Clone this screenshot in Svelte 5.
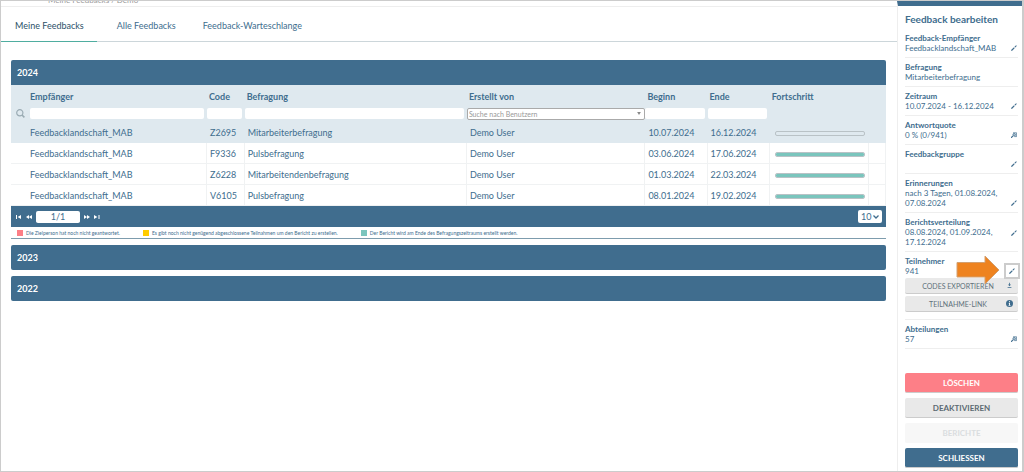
<script>
  const tabs = ['Meine Feedbacks', 'Alle Feedbacks', 'Feedback-Warteschlange'];
  let activeTab = $state('Meine Feedbacks');

  let search = $state({ name: '', code: '', survey: '', user: '', start: '', end: '' });
  let page = $state('1/1');
  let pageSize = $state('10');

  const rows = [
    { name: 'Feedbacklandschaft_MAB', code: 'Z2695', survey: 'Mitarbeiterbefragung', user: 'Demo User', start: '10.07.2024', end: '16.12.2024', progress: 0, selected: true },
    { name: 'Feedbacklandschaft_MAB', code: 'F9336', survey: 'Pulsbefragung', user: 'Demo User', start: '03.06.2024', end: '17.06.2024', progress: 100 },
    { name: 'Feedbacklandschaft_MAB', code: 'Z6228', survey: 'Mitarbeitendenbefragung', user: 'Demo User', start: '01.03.2024', end: '22.03.2024', progress: 100 },
    { name: 'Feedbacklandschaft_MAB', code: 'V6105', survey: 'Pulsbefragung', user: 'Demo User', start: '08.01.2024', end: '19.02.2024', progress: 100 }
  ];

  const legend = [
    { tone: 'red', text: 'Die Zielperson hat noch nicht geantwortet.' },
    { tone: 'yellow', text: 'Es gibt noch nicht genügend abgeschlossene Teilnahmen um den Bericht zu erstellen.' },
    { tone: 'teal', text: 'Der Bericht wird am Ende des Befragungszeitraums erstellt werden.' }
  ];

  const details = [
    { label: 'Feedback-Empfänger', value: 'Feedbacklandschaft_MAB', icon: 'edit' },
    { label: 'Befragung', value: 'Mitarbeiterbefragung' },
    { label: 'Zeitraum', value: '10.07.2024 - 16.12.2024', icon: 'edit' },
    { label: 'Antwortquote', value: '0 % (0/941)', icon: 'view' },
    { label: 'Feedbackgruppe', value: '', icon: 'edit' },
    { label: 'Erinnerungen', value: 'nach 3 Tagen, 01.08.2024, 07.08.2024', icon: 'edit' },
    { label: 'Berichtsverteilung', value: '08.08.2024, 01.09.2024, 17.12.2024', icon: 'edit', middle: true },
    { label: 'Teilnehmer', value: '941', icon: 'edit', marked: true },
    { label: 'Abteilungen', value: '57', icon: 'view' }
  ];
</script>

{#snippet toolIcon(kind)}
  {#if kind === 'edit'}
    <svg width="6" height="6" viewBox="0 0 6 6" aria-hidden="true">
      <path d="M0 6 L.5 4.5 L3 2.2 L3.8 3 L1.5 5.5 Z M3.5 1.7 L4.8 .5 Q5.1 .2 5.5 .5 Q5.8 .9 5.5 1.2 L4.3 2.5 Z" />
    </svg>
  {:else}
    <svg width="6" height="6" viewBox="0 0 6 6" aria-hidden="true">
      <path d="M2 .8 H5.6 V4.6 H3.4" fill="none" stroke="currentColor" stroke-width=".7" />
      <path d="M0 5.8 L2 3.9" fill="none" stroke="currentColor" stroke-width="1.2" />
      <circle cx="3.2" cy="2.7" r="1.3" fill="#a9c0cf" stroke="currentColor" stroke-width=".7" />
    </svg>
  {/if}
{/snippet}

<div class="page">
  <main>
    <div class="crumbs"><span>Meine Feedbacks / Demo</span></div>

    <nav class="tabs">
      {#each tabs as tab}
        <button class="tab" class:active={activeTab === tab} onclick={() => (activeTab = tab)}>{tab}</button>
      {/each}
    </nav>

    <div class="years">
      <section>
        <button class="year open">2024</button>
        <table>
          <colgroup>
            <col class="c-name" /><col class="c-code" /><col class="c-survey" /><col class="c-user" />
            <col class="c-date" /><col class="c-date" /><col class="c-progress" /><col />
          </colgroup>
          <thead>
            <tr>
              <th class="first">Empfänger</th>
              <th>Code</th>
              <th>Befragung</th>
              <th>Erstellt von</th>
              <th>Beginn</th>
              <th>Ende</th>
              <th>Fortschritt</th>
              <th></th>
            </tr>
            <tr class="filters">
              <td>
                <div class="search">
                  <svg width="9" height="9" viewBox="0 0 9 9" aria-hidden="true">
                    <circle cx="3.8" cy="3.8" r="3.1" fill="none" stroke="currentColor" stroke-width="1.2" />
                    <path d="M6 6 L8.4 8.4" stroke="currentColor" stroke-width="1.6" />
                  </svg>
                  <input aria-label="Empfänger" bind:value={search.name} />
                </div>
              </td>
              <td><input aria-label="Code" bind:value={search.code} /></td>
              <td><input aria-label="Befragung" bind:value={search.survey} /></td>
              <td class="user-filter">
                <select aria-label="Erstellt von" bind:value={search.user}>
                  <option value="">Suche nach Benutzern</option>
                  <option value="demo">Demo User</option>
                </select>
              </td>
              <td><input aria-label="Beginn" bind:value={search.start} /></td>
              <td><input aria-label="Ende" bind:value={search.end} /></td>
              <td></td>
              <td></td>
            </tr>
          </thead>
          <tbody>
            {#each rows as row}
              <tr class:selected={row.selected}>
                <td class="first">{row.name}</td>
                <td>{row.code}</td>
                <td>{row.survey}</td>
                <td>{row.user}</td>
                <td>{row.start}</td>
                <td>{row.end}</td>
                <td>
                  <div class="bar" role="progressbar" aria-label="Fortschritt" aria-valuenow={row.progress}>
                    <div class="fill" style="width: {row.progress}%"></div>
                  </div>
                </td>
                <td></td>
              </tr>
            {/each}
          </tbody>
        </table>

        <div class="pager">
          <button aria-label="Erste Seite">
            <svg width="6" height="4" viewBox="0 0 6 4"><path d="M0 0 H1 V4 H0 Z M5 0 V4 L1.6 2 Z" /></svg>
          </button>
          <button aria-label="Vorherige Seite">
            <svg width="6" height="4" viewBox="0 0 6 4"><path d="M3 0 V4 L0 2 Z M6 0 V4 L3 2 Z" /></svg>
          </button>
          <input class="page-no" aria-label="Seite" bind:value={page} />
          <button aria-label="Nächste Seite">
            <svg width="6" height="4" viewBox="0 0 6 4"><path d="M0 0 V4 L3 2 Z M3 0 V4 L6 2 Z" /></svg>
          </button>
          <button aria-label="Letzte Seite">
            <svg width="6" height="4" viewBox="0 0 6 4"><path d="M0 0 V4 L3.4 2 Z M4.5 0 H5.5 V4 H4.5 Z" /></svg>
          </button>
          <select class="page-size" aria-label="Einträge pro Seite" bind:value={pageSize}>
            <option>10</option>
            <option>25</option>
            <option>50</option>
          </select>
        </div>

        <div class="legend">
          {#each legend as item}
            <span class="legend-item"><i class={item.tone}></i>{item.text}</span>
          {/each}
        </div>
      </section>

      <button class="year">2023</button>
      <button class="year">2022</button>
    </div>
  </main>

  <aside>
    <h2>Feedback bearbeiten</h2>

    {#each details as item}
      <div class="detail" class:with-actions={item.marked}>
        <div class="detail-row">
          <div class="detail-text">
            <strong>{item.label}</strong>
            <span>{item.value}</span>
          </div>
          {#if item.icon}
            <button class="tool" class:middle={item.middle} class:marked={item.marked} aria-label="{item.label} öffnen">
              {@render toolIcon(item.icon)}
            </button>
          {/if}
          {#if item.marked}
            <svg class="arrow" width="44" height="30" viewBox="0 0 44 30" aria-hidden="true">
              <path d="M1 7.5 H29 V1 L43 15 L29 29 V22 H1 Z" />
            </svg>
          {/if}
        </div>
        {#if item.marked}
          <button class="action">
            <span>CODES EXPORTIEREN</span>
            <svg width="7" height="7" viewBox="0 0 7 7" aria-hidden="true">
              <path d="M3.1 .8 H3.9 V2.6 H5 L3.5 4.3 L2 2.6 H3.1 Z M1.6 5.2 H5.4 V5.9 H1.6 Z" />
            </svg>
          </button>
          <button class="action">
            <span>TEILNAHME-LINK</span>
            <svg width="7" height="7" viewBox="0 0 7 7" aria-hidden="true">
              <circle cx="3.5" cy="3.5" r="3.5" />
              <path class="light" d="M3 1.2 H4 V2.2 H3 Z M2.7 2.9 H4 V5 H4.5 V5.7 H2.6 V5 H3.1 V3.5 H2.7 Z" />
            </svg>
          </button>
        {/if}
      </div>
    {/each}

    <div class="buttons">
      <button class="danger">LÖSCHEN</button>
      <button>DEAKTIVIEREN</button>
      <button disabled>BERICHTE</button>
      <button class="primary">SCHLIESSEN</button>
    </div>
  </aside>
</div>

<style>
  :global(body) {
    --blue: #406d8e;
    --pale: #dfe9ef;
    --teal: #7ac5bd;
    --line: #f0f2f3;
    background: #fff;
  }

  * { box-sizing: border-box; }

  button, input, select {
    font: inherit;
    color: inherit;
    margin: 0;
    padding: 0;
    border: 0;
    outline: 0;
  }
  button { cursor: pointer; background: none; }
  svg { display: block; fill: currentColor; }

  .page {
    display: flex;
    min-height: 100vh;
    border: 1px solid #ccc;
    border-right-width: 2px;
    font-family: Lato, "Liberation Sans", sans-serif;
    font-size: 9px;
    color: var(--blue);
  }

  main { flex: 1; min-width: 0; }

  .crumbs {
    display: flex;
    align-items: flex-end;
    height: 6px;
    padding-left: 47px;
    padding-bottom: 2px;
    overflow: hidden;
    border-bottom: 1px solid #eee;
    font-size: 8px;
    line-height: 8px;
    color: #999;
  }

  .tabs {
    display: flex;
    height: 35px;
    border-bottom: 1px solid #ccd6da;
  }
  .tab {
    padding: 2px 13px 0 14px;
    margin-bottom: -1px;
    border-bottom: 1px solid transparent;
  }
  .tab.active {
    margin-right: 6px;
    color: #2b5068;
    border-bottom-color: #4fada0;
  }

  .years {
    display: flex;
    flex-direction: column;
    gap: 6px;
    padding: 18px 11px 0 10px;
  }
  .year {
    display: block;
    width: 100%;
    height: 25px;
    padding: 0 6px;
    border-radius: 2px;
    background: var(--blue);
    color: #fff;
    font-weight: 700;
    text-align: left;
  }
  .year.open { border-radius: 2px 2px 0 0; }

  table {
    width: 100%;
    table-layout: fixed;
    border-collapse: separate;
    border-spacing: 0;
  }
  .c-name { width: 22.4%; }
  .c-code { width: 4.3%; }
  .c-survey { width: 25.4%; }
  .c-user { width: 20.4%; }
  .c-date { width: 7.1%; }
  .c-progress { width: 11.4%; }

  th, td { text-align: left; white-space: nowrap; }
  thead { background: var(--pale); }
  th { height: 22px; padding: 0 2px; }
  .filters td { height: 15px; padding: 0 3px 2px 0; }
  .filters .user-filter { padding-right: 0; }
  .filters input {
    display: block;
    width: 100%;
    height: 11px;
    padding: 0 3px;
    border-radius: 2px;
    background: #fff;
  }
  .filters select {
    display: block;
    width: 100%;
    height: 12px;
    padding: 0 1px;
    border: 1px solid #aaa;
    border-radius: 2px;
    appearance: none;
    background: #fff url("data:image/svg+xml,%3Csvg xmlns='http://www.w3.org/2000/svg' viewBox='0 0 5 4'%3E%3Cpath d='M0 0H5L2.5 4Z' fill='%23888'/%3E%3C/svg%3E") no-repeat right 3px center / 4px 3px;
    color: #999;
    font-size: 7px;
  }
  .search {
    display: flex;
    align-items: center;
    gap: 5px;
    padding-left: 5px;
    color: #9aabb3;
  }
  .search svg { flex: none; }

  tbody td {
    height: 21px;
    padding: 0 3px;
    border-right: 1px solid var(--line);
    border-bottom: 1px solid var(--line);
  }
  .selected td { background: var(--pale); border-color: var(--pale); }
  th.first, td.first { padding-left: 19px; }

  .bar {
    height: 5px;
    margin: 2px 0 0 2px;
    border: 1px solid #b9c2c6;
    border-radius: 2px;
    overflow: hidden;
  }
  .fill { height: 100%; background: var(--teal); }

  .pager {
    display: flex;
    align-items: center;
    gap: 4px;
    height: 21px;
    padding: 0 4px 0 5px;
    background: var(--blue);
    color: #fff;
  }
  .pager input, .pager select {
    border-radius: 2px;
    background-color: #fff;
    color: var(--blue);
    font-size: 9px;
  }
  .page-no { width: 44px; height: 12px; text-align: center; }
  .page-size {
    width: 24px;
    height: 13px;
    margin-left: auto;
    padding-left: 3px;
    appearance: none;
    background: url("data:image/svg+xml,%3Csvg xmlns='http://www.w3.org/2000/svg' viewBox='0 0 6 4'%3E%3Cpath d='M.5 .5L3 3L5.5 .5' fill='none' stroke='%23406d8e' stroke-width='1.3'/%3E%3C/svg%3E") no-repeat right 3px center / 6px 4px;
  }

  .legend {
    display: flex;
    gap: 23px;
    align-items: center;
    height: 12px;
    padding-left: 6px;
    border-bottom: 1px solid #7d9cad;
    font-size: 5px;
  }
  .legend-item { display: flex; align-items: center; gap: 3px; }
  .legend i { width: 6px; height: 6px; }
  .red { background: #fd7f87; }
  .yellow { background: #ffcc00; }
  .teal { background: var(--teal); }

  aside {
    display: flex;
    flex-direction: column;
    width: 125px;
    padding: 0 4px 3px 7px;
    border-top: 5px solid var(--blue);
    border-left: 1px solid #eee;
    font-size: 8px;
  }
  h2 {
    margin: 0;
    padding: 7px 0 4px;
    font-size: 10px;
    line-height: 12px;
  }

  .detail {
    padding: 5px 0 4px;
    border-bottom: 1px solid #eee;
  }
  .detail.with-actions { padding-bottom: 7px; }
  .detail-row {
    position: relative;
    display: flex;
    justify-content: space-between;
  }
  .detail-text { width: 98px; }
  .detail strong { display: block; line-height: 9px; }
  .detail span { display: block; min-height: 10px; line-height: 10px; }
  .tool { align-self: flex-end; padding: 2px 1px; }
  .tool.middle { align-self: center; }
  .tool.marked {
    padding: 3px;
    margin: 0 -2px -3px 0;
    border: 2px solid #ccc;
    background: #fff;
  }
  .arrow {
    position: absolute;
    right: 18px;
    top: -2px;
    fill: #ee8320;
    stroke: #d3a070;
    stroke-width: 1;
  }

  .action {
    display: flex;
    align-items: center;
    width: 100%;
    height: 16px;
    padding: 0 5px;
    margin-top: 2px;
    border-bottom: 1px solid #ccc;
    border-radius: 2px;
    background: #e9e9e9;
    font-size: 7px;
  }
  .action span { flex: 1; color: #60717b; }
  .light { fill: #fff; }

  .buttons {
    display: flex;
    flex-direction: column;
    gap: 5px;
    margin-top: auto;
    padding-top: 12px;
  }
  .buttons button {
    height: 20px;
    border-bottom: 1px solid #ccc;
    border-radius: 2px;
    background: #e9e9e9;
    color: #5c6a72;
    font-weight: 700;
  }
  .buttons .danger { background: #fd7f87; color: #fff; }
  .buttons .primary { background: var(--blue); color: #fff; }
  .buttons button:disabled { background: #f7f7f7; border-color: #f7f7f7; color: #dadddf; }
</style>
